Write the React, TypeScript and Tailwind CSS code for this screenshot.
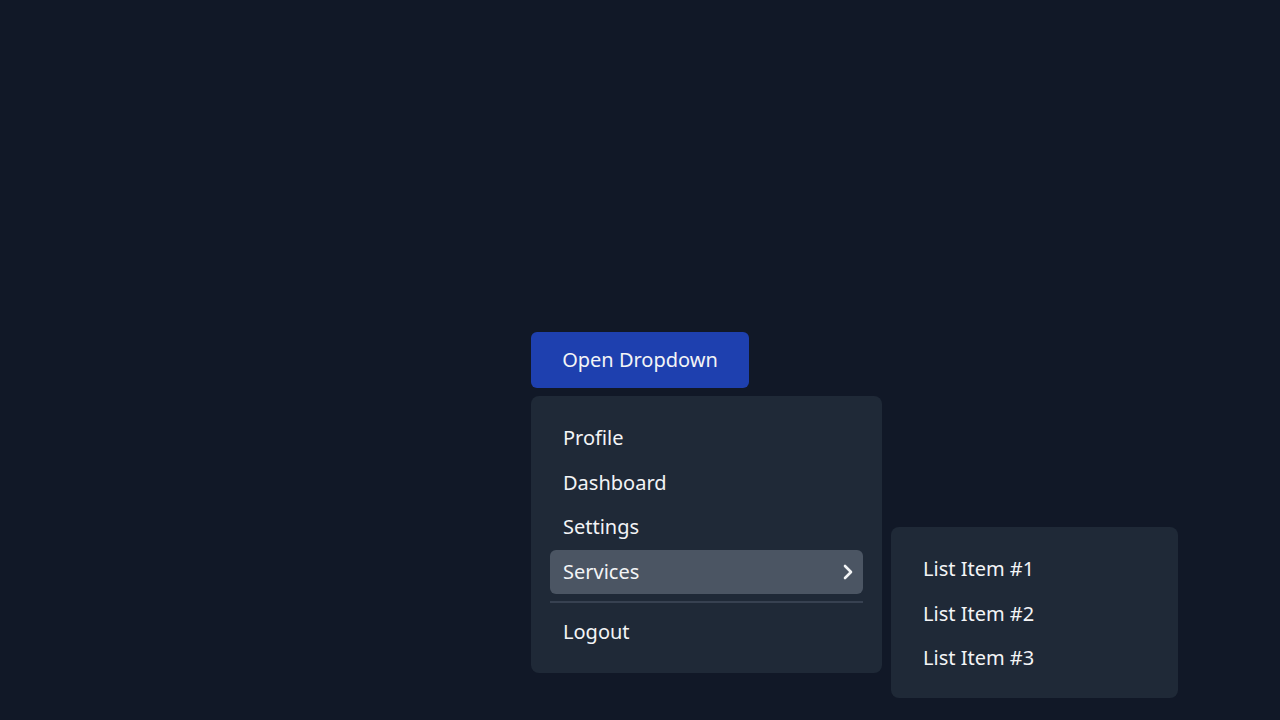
import React from "react";
import { ChevronRight } from "lucide-react";

export default function App() {
  const font = { fontFamily: '"Noto Sans", "Open Sans", sans-serif' };
  return (
    <div className="flex h-screen w-full items-center justify-center bg-[#111827] text-[#f3f4f6]" style={font}>
      <div className="relative">
        <button className="h-[56px] w-[218px] rounded-md bg-[#1e40af] text-[20px] text-[#f3f4f6]">
          Open Dropdown
        </button>
        <div className="absolute left-0 top-[64px] w-[351px] rounded-lg bg-[#1f2937] p-[19px] pt-[20px]">
          {["Profile", "Dashboard", "Settings"].map((t) => (
            <div key={t} className="flex h-[44.5px] items-center px-[13px] text-[20px]">{t}</div>
          ))}
          <div className="flex h-[44px] items-center justify-between rounded-md bg-[#4b5563] pl-[13px] pr-[3px] text-[20px]">
            <span>Services</span>
            <ChevronRight size={24} strokeWidth={2.6} />
          </div>
          <div className="my-[7px] h-[2px] bg-[#374151]" />
          <div className="flex h-[44px] items-center px-[13px] text-[20px]">Logout</div>
          <div className="absolute left-[360px] top-[131px] w-[287px] rounded-lg bg-[#1f2937] px-[20px] pb-[17px] pt-[20px]">
            {["List Item #1", "List Item #2", "List Item #3"].map((t) => (
              <div key={t} className="flex h-[44.5px] items-center px-[12px] text-[20px]">{t}</div>
            ))}
          </div>
        </div>
      </div>
    </div>
  );
}
